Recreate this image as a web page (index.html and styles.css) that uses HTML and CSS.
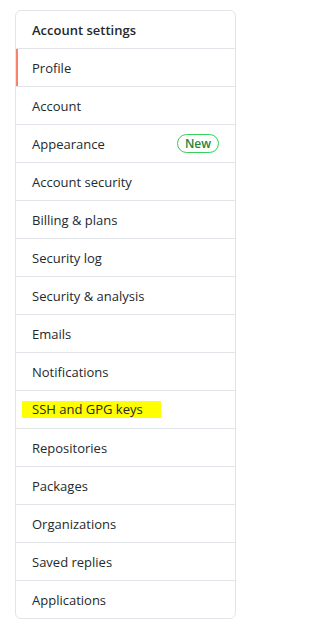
FILE: index.html
```html
<!DOCTYPE html>
<html>
<head>
<meta charset="utf-8">
<link rel="stylesheet" href="styles.css">
</head>
<body>
<nav class="menu">
  <div class="menu-heading">Account settings</div>
  <a class="menu-item selected">Profile</a>
  <a class="menu-item">Account</a>
  <a class="menu-item">Appearance <span class="badge">New</span></a>
  <a class="menu-item">Account security</a>
  <a class="menu-item">Billing &amp; plans</a>
  <a class="menu-item">Security log</a>
  <a class="menu-item">Security &amp; analysis</a>
  <a class="menu-item">Emails</a>
  <a class="menu-item">Notifications</a>
  <a class="menu-item"><span class="highlight">SSH and GPG keys</span></a>
  <a class="menu-item">Repositories</a>
  <a class="menu-item">Packages</a>
  <a class="menu-item">Organizations</a>
  <a class="menu-item">Saved replies</a>
  <a class="menu-item">Applications</a>
</nav>
</body>
</html>
```
FILE: styles.css
```css
html, body {
  margin: 0;
  padding: 0;
  background: #ffffff;
}
body {
  padding: 10px 0 0 15px;
  font-family: "Open Sans", "Noto Sans", sans-serif;
  font-size: 13px;
  color: #24292e;
}
.menu {
  width: 221px;
  box-sizing: border-box;
  border: 1px solid #e1e4e8;
  border-radius: 6px;
  display: flex;
  flex-direction: column;
}
.menu-heading,
.menu-item {
  height: 37px;
  border-bottom: 1px solid #e1e4e8;
  padding: 0 16px;
  display: flex;
  align-items: center;
  justify-content: space-between;
}
.menu-heading {
  font-weight: 600;
}
.menu-item:last-child {
  border-bottom: none;
}
.menu-item.selected {
  box-shadow: inset 2px 0 0 #f9826c;
}
.badge {
  border: 1px solid #34d058;
  color: #22863a;
  border-radius: 10px;
  font-size: 12px;
  font-weight: 600;
  padding: 0 7px;
  line-height: 17px;
}
.highlight {
  background: #ffff00;
  margin-left: -10px;
  padding: 0 18px 0 10px;
  line-height: 17px;
}
```
